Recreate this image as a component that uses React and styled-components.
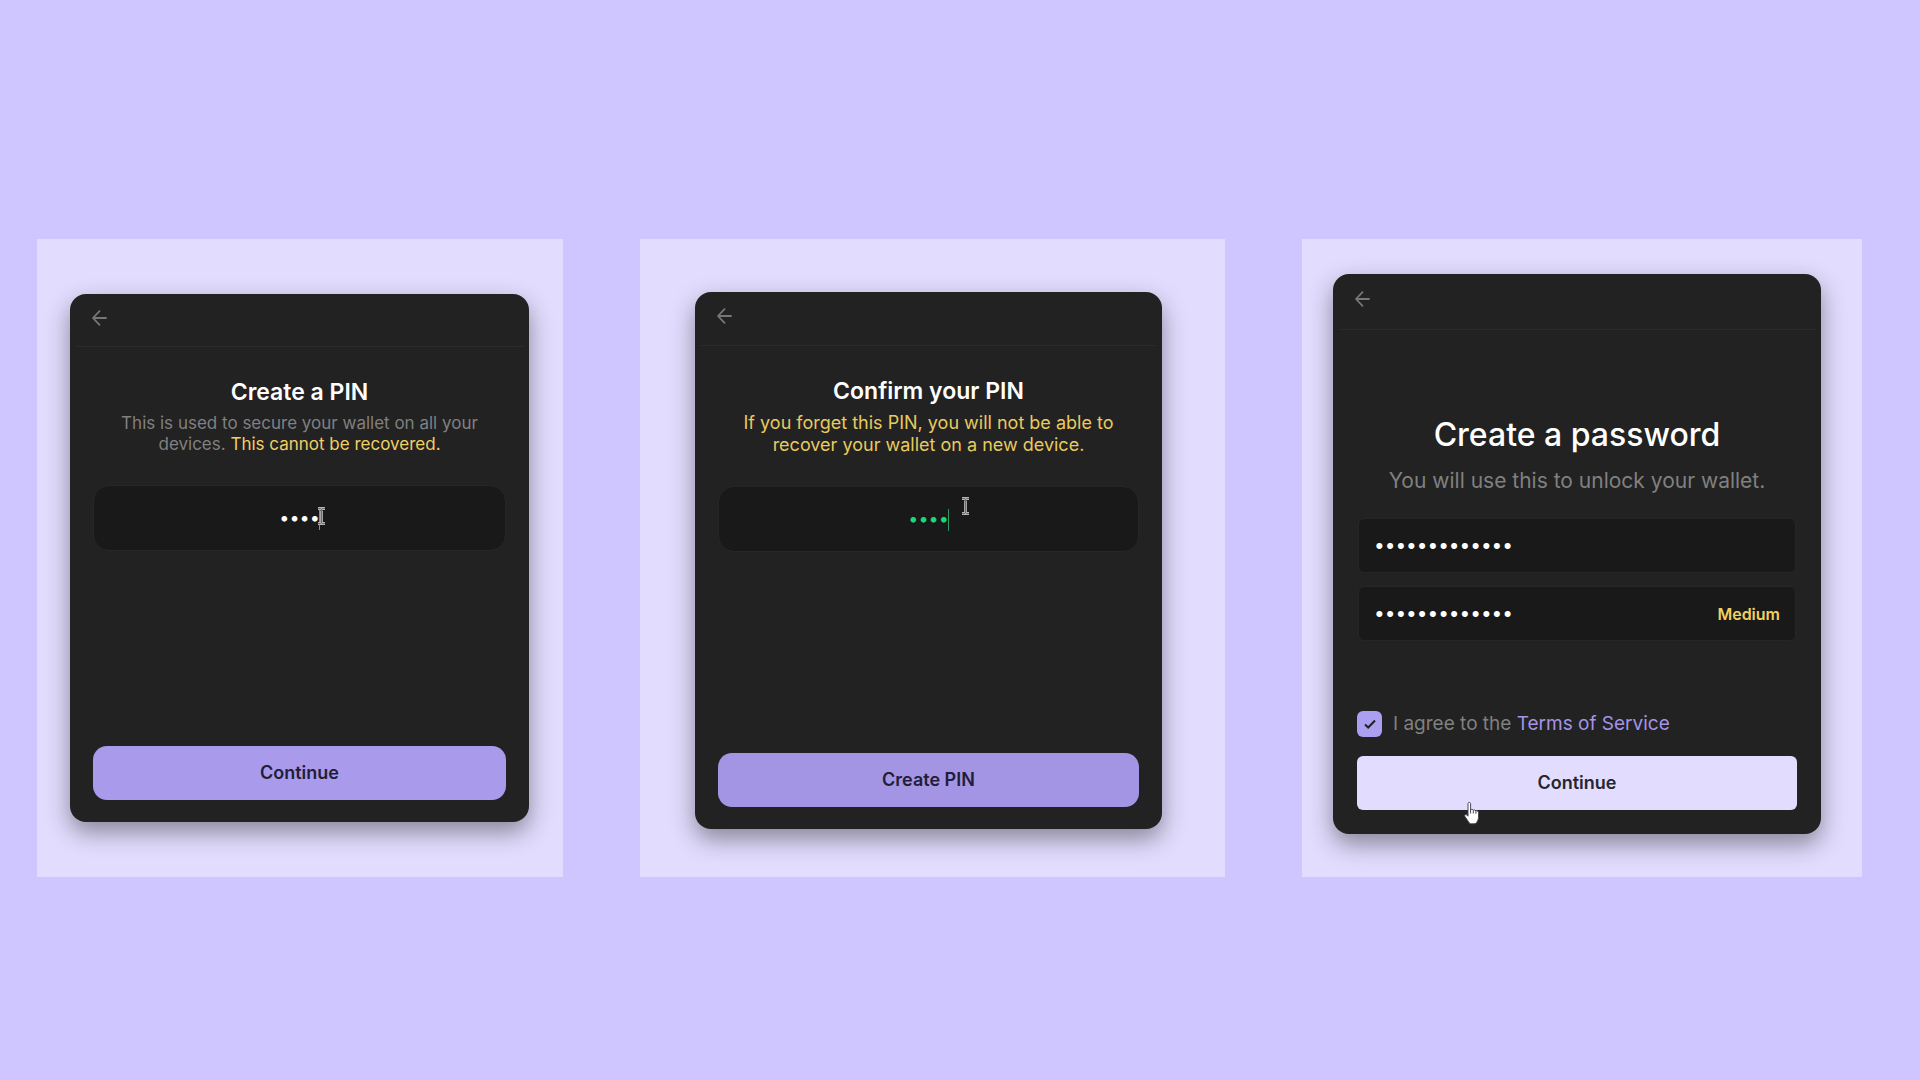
import React from "react";
import styled, { createGlobalStyle } from "styled-components";

const GlobalStyle = createGlobalStyle`
  *, *::before, *::after { box-sizing: border-box; }
  body {
    margin: 0;
    background: #d0c6ff;
    font-family: Inter, "Liberation Sans", sans-serif;
  }
`;

const Page = styled.main`
  min-height: 100vh;
  padding: 239px 58px 203px 37px;
  display: grid;
  grid-template-columns: 526fr 585fr 560fr;
  gap: 77px;
`;

const Frame = styled.section`
  display: flex;
  background: #e2ddfe;
  padding: ${(p) => p.$pad};
`;

const Card = styled.form`
  flex: 1;
  display: flex;
  flex-direction: column;
  background: #222222;
  border-radius: 16px;
  box-shadow: 0 10px 24px rgba(0, 0, 0, 0.4);
`;

const Header = styled.header`
  display: flex;
  align-items: center;
  height: ${(p) => p.$height}px;
  margin: 0 5px;
  padding: 0 17px 5px;
  border-bottom: 1px solid #2a2a2a;
`;

const BackButton = styled.button`
  display: flex;
  padding: 0;
  border: 0;
  background: none;
  color: #777777;
  cursor: pointer;
`;

const Body = styled.div`
  flex: 1;
  display: flex;
  flex-direction: column;
  padding: ${(p) => (p.$large ? "85px 25px 24px" : "29px 24px 22px")};
`;

const Title = styled.h1`
  margin: 0;
  text-align: center;
  color: #ffffff;
  font-size: ${(p) => (p.$large ? 32 : 23)}px;
  line-height: ${(p) => (p.$large ? 40 : 32)}px;
  font-weight: ${(p) => (p.$large ? 500 : 600)};
`;

const Subtitle = styled.p`
  margin: ${(p) => (p.$large ? "14px 0 25px" : "5px 0 30px")};
  padding: 0 16px;
  text-align: center;
  color: ${(p) => (p.$warning ? "#e8ca5e" : "#808080")};
  font-size: ${(p) => (p.$large ? 21 : p.$warning ? 18 : 17)}px;
  line-height: ${(p) => (p.$large ? 24 : p.$warning ? 22 : 21)}px;
`;

const Warning = styled.span`
  color: #f0d062;
`;

const Field = styled.div`
  position: relative;
  display: flex;
  align-items: center;
  height: ${(p) => (p.$pin ? 66 : 55)}px;
  margin: 0 ${(p) => (p.$pin ? -1 : 0)}px;
  padding: 0 15px;
  border: 1px solid #262626;
  border-radius: ${(p) => (p.$pin ? 16 : 6)}px;
  background: #191919;

  & + & { margin-top: 13px; }
`;

const SecretInput = styled.input`
  flex: 1;
  min-width: 0;
  padding: 0;
  border: 0;
  outline: 0;
  background: none;
  color: ${(p) => p.$color || "#ffffff"};
  font-family: inherit;
  font-size: ${(p) => (p.$centered ? 18 : 19)}px;
  line-height: 24px;
  text-align: ${(p) => (p.$centered ? "center" : "left")};
`;

const Strength = styled.output`
  color: #f0d062;
  font-size: 16px;
  font-weight: 600;
`;

const Caret = styled.span`
  position: absolute;
  top: 22px;
  left: calc(50% + 19px);
  width: 1px;
  height: 22px;
  background: ${(p) => p.$color};
`;

const TextPointer = styled.svg`
  position: absolute;
  top: ${(p) => p.$top}px;
  left: calc(50% + ${(p) => p.$shift}px);
  width: 9px;
  height: 18px;
`;

const HandPointer = styled.svg`
  position: absolute;
  top: 45px;
  left: 106px;
  width: 18px;
  height: 24px;
`;

const Footer = styled.div`
  display: flex;
  flex-direction: column;
  gap: 19px;
  margin: auto -1px 0;
`;

const PrimaryButton = styled.button`
  height: 54px;
  padding: 0 0 2px;
  border: 0;
  border-radius: ${(p) => (p.$bright ? 6 : 14)}px;
  background: ${(p) => (p.$bright ? "#e2dcff" : p.$dim ? "#a395e4" : "#a99aeb")};
  color: ${(p) => (p.$bright ? "#26262c" : "#221d38")};
  font-family: inherit;
  font-size: 18px;
  font-weight: 600;
  cursor: pointer;
`;

const ButtonArea = styled.div`
  position: relative;
  display: grid;
`;

const Agreement = styled.div`
  display: flex;
  align-items: center;
  gap: 11px;
  color: #808080;
  font-size: 19px;
  line-height: 26px;
`;

const Tick = styled.span`
  display: grid;
  place-items: center;

  & > * { grid-area: 1 / 1; }
  & > svg { pointer-events: none; }
`;

const Checkbox = styled.input`
  appearance: none;
  width: 25px;
  height: 26px;
  margin: 0;
  border-radius: 6px;
  background: #ab9ff2;
`;

const TermsLink = styled.a`
  color: #a493e6;
  text-decoration: none;
`;

function Back() {
  return (
    <BackButton type="button" aria-label="Back">
      <svg width="16" height="16" viewBox="0 0 16 16" fill="none" stroke="currentColor" strokeWidth="1.8" strokeLinecap="round" strokeLinejoin="round">
        <path d="M14 8H1.200M7.500 1.200 1 8 7.500 14.800" />
      </svg>
    </BackButton>
  );
}

function IBeam({ top, shift }) {
  const d = "M1 1.500H3.500L4.500 2.500 5.500 1.500H8M4.500 2.500V15.500M1 16.500H3.500L4.500 15.500 5.500 16.500H8";
  return (
    <TextPointer $top={top} $shift={shift} viewBox="0 0 9 18" fill="none" aria-hidden="true">
      <path d={d} stroke="#b4b4b4" strokeWidth="2.800" />
      <path d={d} stroke="#4a4a4a" strokeWidth="0.700" />
    </TextPointer>
  );
}

function Hand() {
  return (
    <HandPointer viewBox="0 0 18 24" aria-hidden="true">
      <path
        d="M5 2.600C5 1 7.600 1 7.600 2.600V9c.4-1 2.500-.9 2.700.4.6-.8 2.300-.5 2.500.7.7-.6 2.700-.1 2.700 1.500v4.600c0 2-.8 3-1.300 4.300-.5 1.600-1.700 2.300-3.300 2.300H8.600c-1.500 0-2.300-.7-3-1.900L2 15.600c-1-1.600.6-2.700 1.800-1.700L5 15.200z"
        fill="#ffffff"
        stroke="#4a4658"
        strokeWidth="1"
        strokeLinejoin="round"
      />
      <path d="M7.600 9v3.500M10.300 9.500v3M12.900 10.200v2.500" stroke="#4a4658" strokeWidth="1" fill="none" />
    </HandPointer>
  );
}

export default function App() {
  return (
    <>
      <GlobalStyle />
      <Page>
        <Frame $pad="55px 34px 55px 33px">
          <Card>
            <Header $height={53}><Back /></Header>
            <Body>
              <Title id="create-pin">Create a PIN</Title>
              <Subtitle>
                This is used to secure your wallet on all your devices. <Warning>This cannot be recovered.</Warning>
              </Subtitle>
              <Field $pin>
                <SecretInput type="password" aria-labelledby="create-pin" defaultValue="1234" $centered />
                <Caret $color="#8a8a8a" />
                <IBeam top={21} shift={17} />
              </Field>
              <Footer>
                <PrimaryButton type="button">Continue</PrimaryButton>
              </Footer>
            </Body>
          </Card>
        </Frame>

        <Frame $pad="53px 63px 48px 55px">
          <Card>
            <Header $height={54}><Back /></Header>
            <Body>
              <Title id="confirm-pin">Confirm your PIN</Title>
              <Subtitle $warning>
                If you forget this PIN, you will not be able to recover your wallet on a new device.
              </Subtitle>
              <Field $pin>
                <SecretInput type="password" aria-labelledby="confirm-pin" defaultValue="1234" $centered $color="#12dc78" />
                <Caret $color="#2b9a62" />
                <IBeam top={10} shift={32} />
              </Field>
              <Footer>
                <PrimaryButton type="button" $dim>Create PIN</PrimaryButton>
              </Footer>
            </Body>
          </Card>
        </Frame>

        <Frame $pad="35px 41px 43px 31px">
          <Card>
            <Header $height={56}><Back /></Header>
            <Body $large>
              <Title id="create-password" $large>Create a password</Title>
              <Subtitle $large>You will use this to unlock your wallet.</Subtitle>
              <Field>
                <SecretInput type="password" aria-labelledby="create-password" defaultValue="correcthorse1" />
              </Field>
              <Field>
                <SecretInput id="repeat" type="password" aria-labelledby="create-password" defaultValue="correcthorse1" />
                <Strength htmlFor="repeat">Medium</Strength>
              </Field>
              <Footer>
                <Agreement>
                  <Tick>
                    <Checkbox id="agree" type="checkbox" defaultChecked />
                    <svg width="12" height="12" viewBox="0 0 12 12" fill="none" stroke="#222222" strokeWidth="2">
                      <path d="M1 6.500 4.200 9.500 11 2.500" />
                    </svg>
                  </Tick>
                  <label htmlFor="agree">
                    I agree to the <TermsLink href="#terms">Terms of Service</TermsLink>
                  </label>
                </Agreement>
                <ButtonArea>
                  <PrimaryButton type="button" $bright>Continue</PrimaryButton>
                  <Hand />
                </ButtonArea>
              </Footer>
            </Body>
          </Card>
        </Frame>
      </Page>
    </>
  );
}
